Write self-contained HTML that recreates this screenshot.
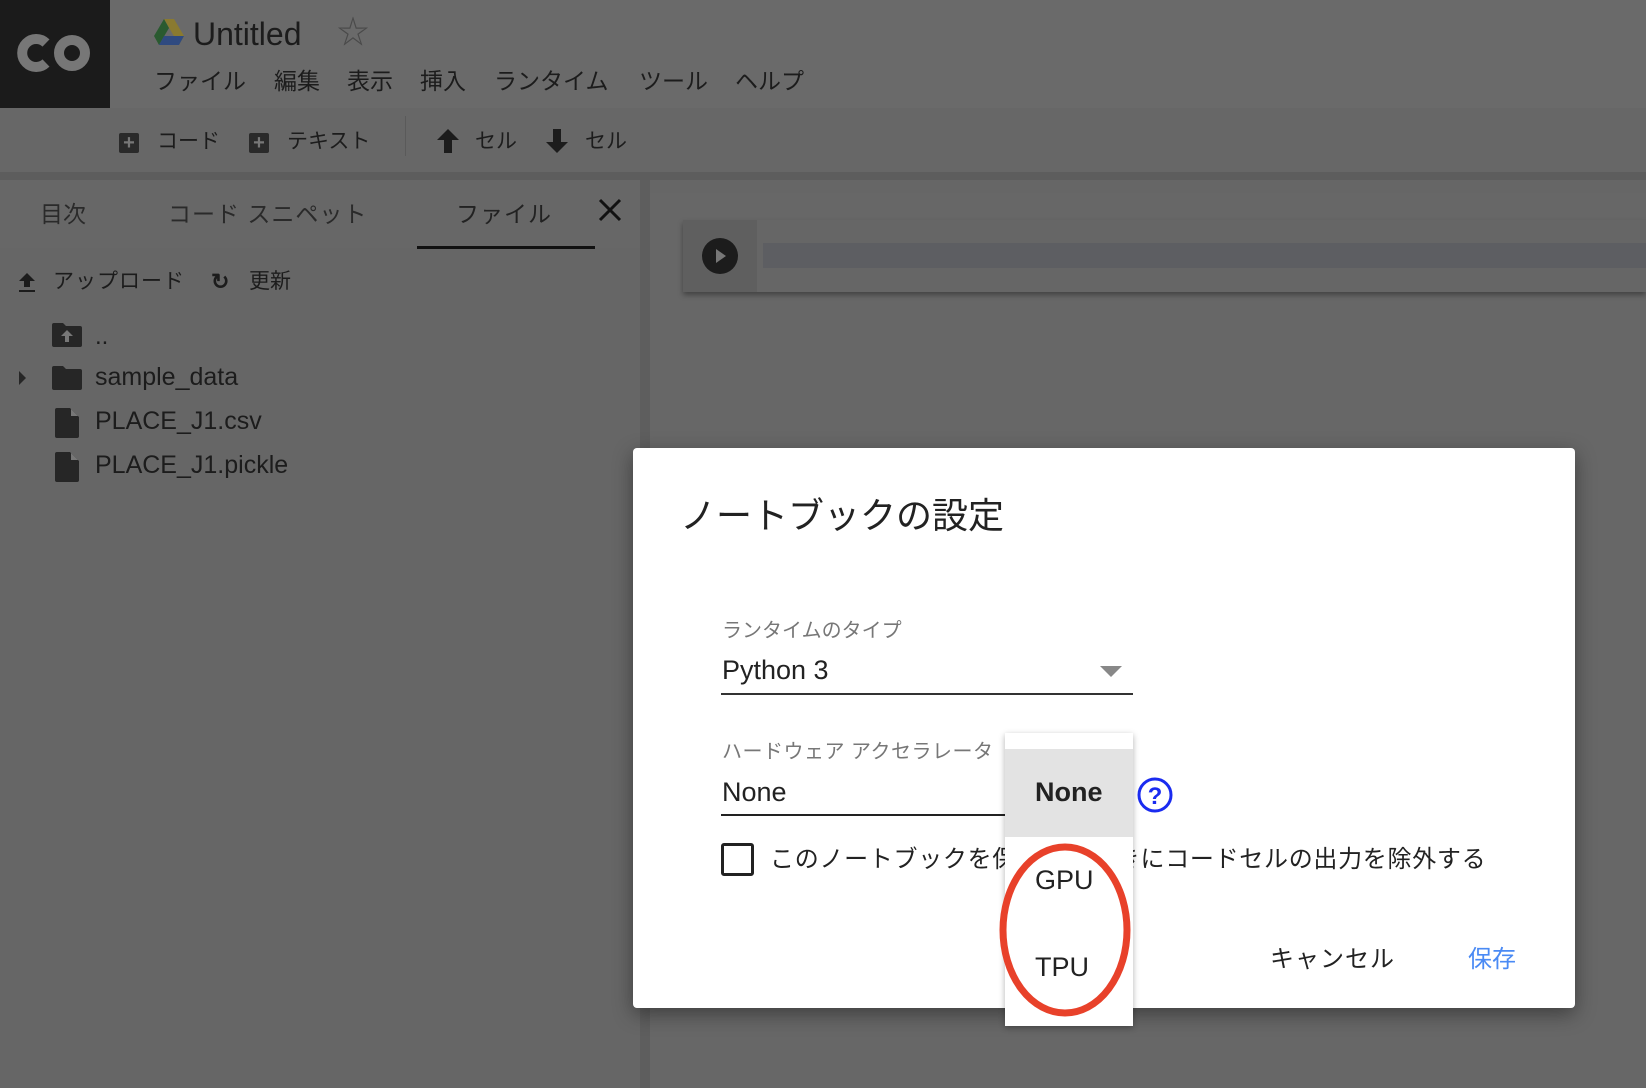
<!DOCTYPE html>
<html><head><meta charset="utf-8"><style>
*{margin:0;padding:0;box-sizing:border-box}
body{width:1646px;height:1088px;overflow:hidden;background:#666;font-family:"Liberation Sans","Noto Sans CJK JP",sans-serif;color:#1c1c1c;position:relative}
.a{position:absolute;white-space:nowrap;line-height:1}
</style></head><body>
<div class="a" style="left:0;top:0;width:1646px;height:108px;background:#6a6a6a"></div>
<div class="a" style="left:0;top:108px;width:1646px;height:64px;background:#676767"></div>
<div class="a" style="left:0;top:172px;width:1646px;height:8px;background:#5d5d5d"></div>
<div class="a" style="left:0;top:0;width:110px;height:108px;background:#1b1b1b"></div>
<svg class="a" style="left:14px;top:30px" width="80" height="46" viewBox="0 0 80 46"><path d="M32 13A14 14 0 1 0 32 33" fill="none" stroke="#777" stroke-width="10"/><circle cx="58" cy="23" r="13" fill="none" stroke="#777" stroke-width="10"/></svg>
<svg class="a" style="left:154px;top:19px" width="30" height="26" viewBox="0 0 30 26"><polygon points="10,0 20,0 30,17 25,26" fill="#8a7a30"/><polygon points="10,0 0,17 5,26 15,9" fill="#2a5a30"/><polygon points="5,26 10,17 30,17 25,26" fill="#2f4a80"/></svg>
<div class="a" style="left:193px;top:18px;font-size:32px">Untitled</div>
<div class="a" style="left:337px;top:16px;font-size:32px;color:#4a4a4a">☆</div>
<div class="a" style="left:154px;top:70px;font-size:23px">ファイル</div>
<div class="a" style="left:274px;top:70px;font-size:23px">編集</div>
<div class="a" style="left:347px;top:70px;font-size:23px">表示</div>
<div class="a" style="left:420px;top:70px;font-size:23px">挿入</div>
<div class="a" style="left:494px;top:70px;font-size:23px">ランタイム</div>
<div class="a" style="left:639px;top:70px;font-size:23px">ツール</div>
<div class="a" style="left:735px;top:70px;font-size:23px">ヘルプ</div>
<div class="a" style="left:119px;top:133px;width:20px;height:20px;background:#2a2a2a;border-radius:2px;color:#777;font-size:20px;text-align:center;line-height:20px;font-weight:bold">+</div>
<div class="a" style="left:157px;top:131px;font-size:21px">コード</div>
<div class="a" style="left:249px;top:133px;width:20px;height:20px;background:#2a2a2a;border-radius:2px;color:#777;font-size:20px;text-align:center;line-height:20px;font-weight:bold">+</div>
<div class="a" style="left:287px;top:131px;font-size:21px">テキスト</div>
<div class="a" style="left:405px;top:116px;width:1px;height:40px;background:#5a5a5a"></div>
<svg class="a" style="left:437px;top:129px" width="22" height="24" viewBox="0 0 22 24"><path d="M11 0L22 11H15V24H7V11H0Z" fill="#1c1c1c"/></svg>
<div class="a" style="left:475px;top:131px;font-size:21px">セル</div>
<svg class="a" style="left:546px;top:129px" width="22" height="24" viewBox="0 0 22 24"><path d="M11 24L22 13H15V0H7V13H0Z" fill="#1c1c1c"/></svg>
<div class="a" style="left:585px;top:131px;font-size:21px">セル</div>
<!-- left panel -->
<div class="a" style="left:0;top:180px;width:640px;height:908px;background:#666"></div>
<div class="a" style="left:0;top:180px;width:640px;height:68px;background:#676767"></div>
<div class="a" style="left:640px;top:180px;width:10px;height:908px;background:#5e5e5e"></div>
<div class="a" style="left:40px;top:203px;font-size:23px;color:#2a2a2a">目次</div>
<div class="a" style="left:168px;top:203px;font-size:23px;color:#2a2a2a;letter-spacing:1px">コード スニペット</div>
<div class="a" style="left:456px;top:203px;font-size:23px;color:#222;letter-spacing:1px">ファイル</div>
<div class="a" style="left:417px;top:246px;width:178px;height:3px;background:#111"></div>
<svg class="a" style="left:598px;top:198px" width="24" height="24" viewBox="0 0 24 24"><path d="M2 2L22 22M22 2L2 22" stroke="#111" stroke-width="3"/></svg>
<svg class="a" style="left:18px;top:273px" width="18" height="20" viewBox="0 0 18 20"><path d="M9 0L17 8H12V14H6V8H1Z" fill="#1c1c1c"/><rect x="1" y="17" width="16" height="2" fill="#1c1c1c"/></svg>
<div class="a" style="left:53px;top:271px;font-size:21px;letter-spacing:1px">アップロード</div>
<div class="a" style="left:211px;top:271px;font-size:22px;font-weight:bold">↻</div>
<div class="a" style="left:249px;top:271px;font-size:21px">更新</div>
<svg class="a" style="left:52px;top:323px" width="30" height="24" viewBox="0 0 30 24"><path d="M0 2Q0 0 2 0H11L14 3H28Q30 3 30 5V22Q30 24 28 24H2Q0 24 0 22Z" fill="#262626"/><path d="M15 7L21 13H17V19H13V13H9Z" fill="#777"/></svg>
<div class="a" style="left:95px;top:325px;font-size:24px">..</div>
<svg class="a" style="left:17px;top:370px" width="10" height="16"><path d="M2 1L9 8L2 15Z" fill="#262626"/></svg>
<svg class="a" style="left:52px;top:366px" width="30" height="24" viewBox="0 0 30 24"><path d="M0 2Q0 0 2 0H11L14 3H28Q30 3 30 5V22Q30 24 28 24H2Q0 24 0 22Z" fill="#262626"/></svg>
<div class="a" style="left:95px;top:365px;font-size:25px">sample_data</div>
<svg class="a" style="left:55px;top:408px" width="24" height="30" viewBox="0 0 24 30"><path d="M2 0H15L24 9V28Q24 30 22 30H2Q0 30 0 28V2Q0 0 2 0Z" fill="#262626"/><path d="M16 1L23 8H16Z" fill="#777"/></svg>
<div class="a" style="left:95px;top:409px;font-size:25px">PLACE_J1.csv</div>
<svg class="a" style="left:55px;top:452px" width="24" height="30" viewBox="0 0 24 30"><path d="M2 0H15L24 9V28Q24 30 22 30H2Q0 30 0 28V2Q0 0 2 0Z" fill="#262626"/><path d="M16 1L23 8H16Z" fill="#777"/></svg>
<div class="a" style="left:95px;top:453px;font-size:25px">PLACE_J1.pickle</div>
<!-- main -->
<div class="a" style="left:650px;top:193px;width:996px;height:895px;background:#676767"></div>
<div class="a" style="left:683px;top:220px;width:963px;height:72px;background:#666;box-shadow:0 3px 5px rgba(0,0,0,.35)"></div>
<div class="a" style="left:683px;top:220px;width:74px;height:72px;background:#5f5f5f"></div>
<div class="a" style="left:763px;top:243px;width:883px;height:25px;background:#5d5e62"></div>
<svg class="a" style="left:702px;top:238px" width="36" height="36"><circle cx="18" cy="18" r="18" fill="#1c1c1c"/><path d="M14 11L24 18L14 25Z" fill="#777"/></svg>
<!-- dialog -->
<div class="a" style="left:633px;top:448px;width:942px;height:560px;background:#fff;border-radius:4px;box-shadow:0 6px 20px rgba(0,0,0,.4)"></div>
<div class="a" style="left:680px;top:498px;font-size:36px;color:#222">ノートブックの設定</div>
<div class="a" style="left:722px;top:621px;font-size:20px;color:#777">ランタイムのタイプ</div>
<div class="a" style="left:722px;top:657px;font-size:27px;color:#222">Python 3</div>
<svg class="a" style="left:1100px;top:666px" width="22" height="12"><path d="M0 0H22L11 11Z" fill="#888"/></svg>
<div class="a" style="left:721px;top:693px;width:412px;height:2px;background:#333"></div>
<div class="a" style="left:722px;top:742px;font-size:20px;color:#777;letter-spacing:.5px">ハードウェア アクセラレータ</div>
<div class="a" style="left:722px;top:779px;font-size:27px;color:#222">None</div>
<div class="a" style="left:721px;top:814px;width:290px;height:2px;background:#222"></div>
<div class="a" style="left:721px;top:843px;width:33px;height:33px;border:3px solid #222;border-radius:3px"></div>
<div class="a" style="left:770px;top:848px;font-size:24px;color:#222;letter-spacing:.7px">このノートブックを保存するときにコードセルの出力を除外する</div>
<div class="a" style="left:1270px;top:948px;font-size:24px;color:#222;letter-spacing:1px">キャンセル</div>
<div class="a" style="left:1468px;top:948px;font-size:24px;color:#4a8af4">保存</div>
<!-- dropdown -->
<div class="a" style="left:1005px;top:733px;width:128px;height:293px;background:#fff;box-shadow:0 2px 6px rgba(0,0,0,.3)"></div>
<div class="a" style="left:1005px;top:749px;width:128px;height:88px;background:#e3e3e3"></div>
<div class="a" style="left:1035px;top:779px;font-size:27px;font-weight:bold;color:#222">None</div>
<div class="a" style="left:1035px;top:867px;font-size:27px;color:#222">GPU</div>
<div class="a" style="left:1035px;top:954px;font-size:27px;color:#222">TPU</div>
<svg class="a" style="left:1136px;top:776px" width="38" height="38"><circle cx="19" cy="19" r="16" fill="none" stroke="#1a2bf0" stroke-width="3"/><text x="19" y="28" font-size="24" font-weight="bold" text-anchor="middle" fill="#1a2bf0" font-family="Liberation Sans">?</text></svg>
<svg class="a" style="left:996px;top:840px" width="138" height="180"><ellipse cx="69" cy="90" rx="62" ry="83" fill="none" stroke="#e8412a" stroke-width="7"/></svg>
</body></html>
